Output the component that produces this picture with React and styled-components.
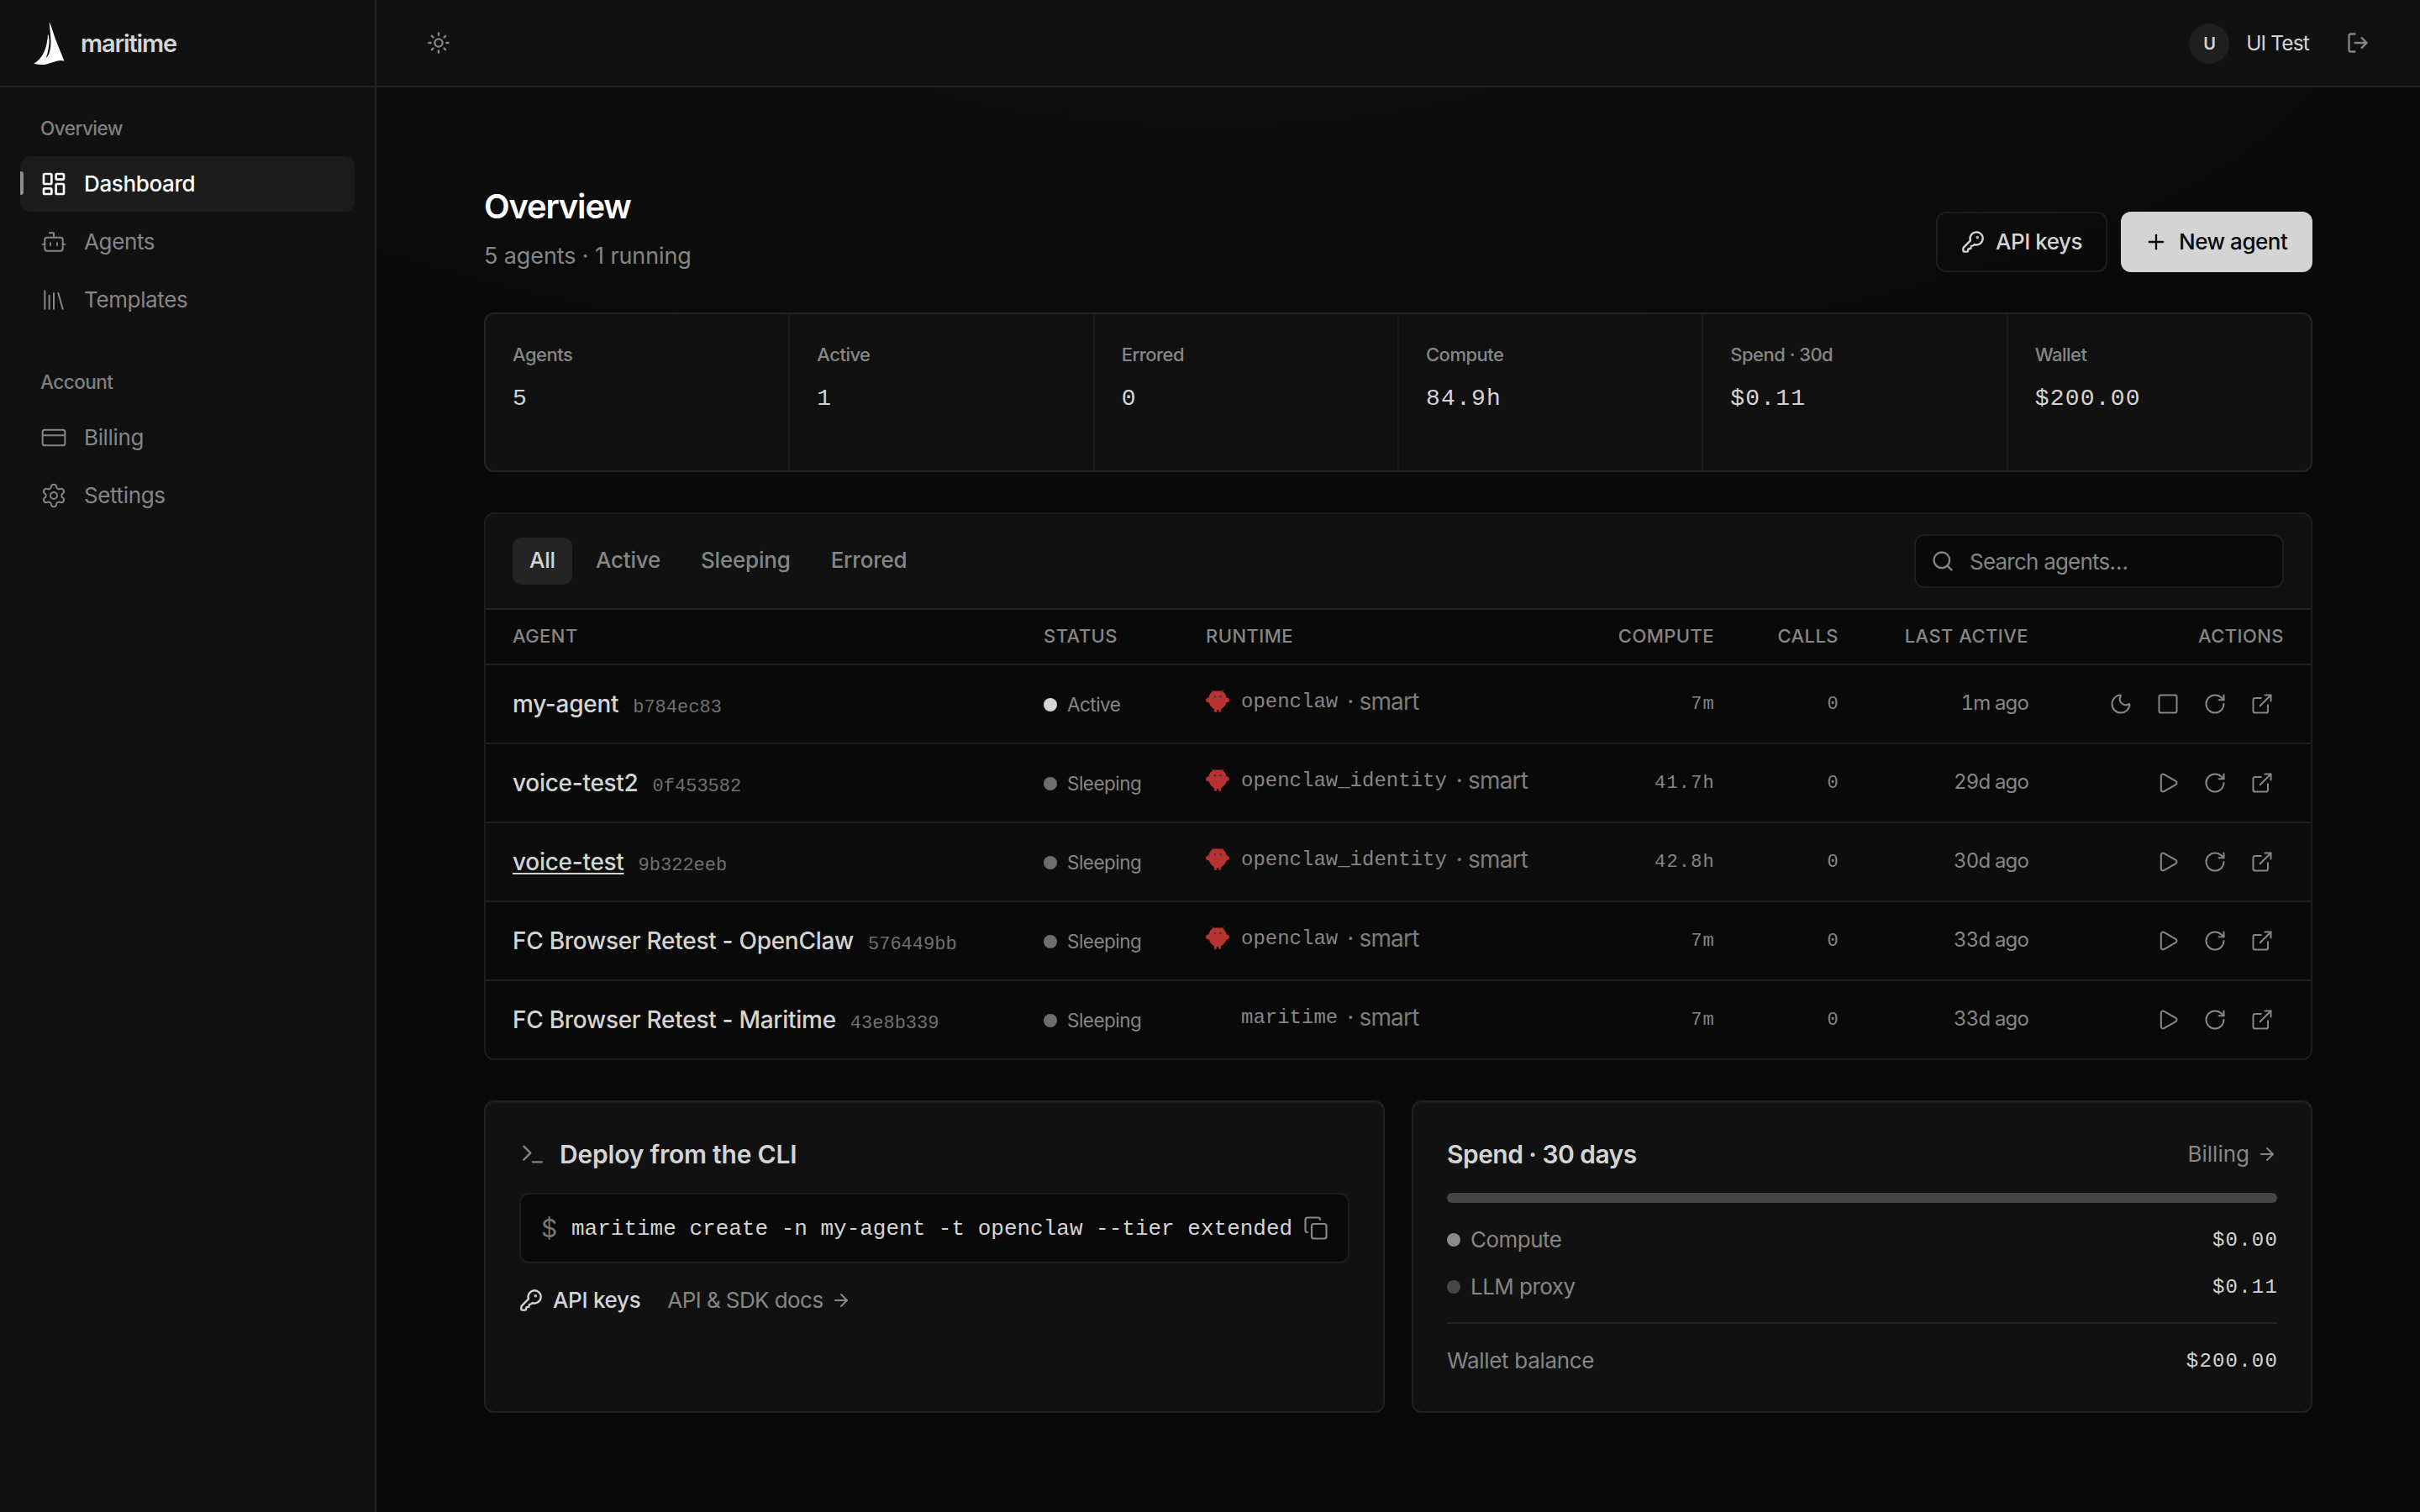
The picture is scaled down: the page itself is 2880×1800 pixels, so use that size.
import styled, { createGlobalStyle } from "styled-components";
import {
  ArrowRight,
  Copy,
  CreditCard,
  ExternalLink,
  KeyRound,
  LayoutDashboard,
  LogOut,
  Moon,
  Play,
  Plus,
  RotateCw,
  Search,
  Square,
  Sun,
  Terminal,
} from "lucide-react";

const GlobalStyle = createGlobalStyle`
  * {
    box-sizing: border-box;
  }

  body {
    margin: 0;
    background: #090909;
    color: #d4d4d4;
    font-family: "Inter", "Liberation Sans", sans-serif;
    font-size: 26px;
    letter-spacing: -0.02em;
    line-height: 1;
  }

  h1, h2, p {
    margin: 0;
    font-weight: 400;
  }

  button {
    font: inherit;
    letter-spacing: inherit;
    color: inherit;
    background: none;
    border: 0;
    padding: 0;
    cursor: pointer;
  }

  svg {
    display: block;
    flex: none;
  }
`;

const Shell = styled.div`
  display: grid;
  grid-template-columns: 448px 1fr;
  width: 2880px;
  height: 1800px;
  overflow: hidden;
  background: radial-gradient(
    ellipse 1470px 470px at 50% 0,
    #0e0e0e 0%,
    #0d0d0d 70%,
    #090909 100%
  );
`;

const Sidebar = styled.aside`
  background: #111111;
  border-right: 2px solid #242424;
`;

const Brand = styled.div`
  display: flex;
  align-items: center;
  gap: 19px;
  height: 104px;
  padding: 0 0 0 40px;
  border-bottom: 2px solid #242424;
  font-size: 29px;
  font-weight: 600;
  letter-spacing: -0.04em;
`;

const Nav = styled.nav`
  display: flex;
  flex-direction: column;
  gap: 3px;
  padding: 35px 24px 0;
`;

const NavLabel = styled.p`
  height: ${(props) => (props.$spaced ? "92px" : "44px")};
  padding: ${(props) => (props.$spaced ? "48px" : "0")} 0 0 24px;
  font-size: 22.5px;
  font-weight: 500;
  line-height: 28px;
  color: #808080;
`;

const NavItem = styled.a`
  position: relative;
  display: flex;
  align-items: center;
  gap: 20px;
  width: 398px;
  height: 66px;
  padding-left: 24px;
  border-radius: 12px;
  background: ${(props) => (props.$active ? "#1c1c1c" : "none")};
  color: ${(props) => (props.$active ? "#ffffff" : "#868686")};
  font-weight: ${(props) => (props.$active ? 500 : 400)};
  letter-spacing: -0.014em;

  &::before {
    content: "";
    display: ${(props) => (props.$active ? "block" : "none")};
    position: absolute;
    left: 0;
    top: 18px;
    width: 4px;
    height: 28px;
    border-radius: 0 3px 3px 0;
    background: #8c8c8c;
  }
`;

const Column = styled.div`
  display: flex;
  flex-direction: column;
`;

const Topbar = styled.header`
  display: flex;
  align-items: center;
  height: 104px;
  padding: 0 60px;
  background: #111111;
  border-bottom: 2px solid #242424;
  color: #868686;

  & > .user {
    display: flex;
    align-items: center;
    gap: 20px;
    margin-left: auto;
    margin-right: 44px;
    padding-top: 1px;
    font-size: 24.5px;
    letter-spacing: -0.035em;
    color: #d4d4d4;
  }
`;

const Avatar = styled.div`
  display: flex;
  align-items: center;
  justify-content: center;
  width: 48px;
  height: 48px;
  border-radius: 50%;
  background: #1f1f1f;
  font-size: 20px;
  font-weight: 600;
`;

const Main = styled.main`
  width: 2176px;
  margin-left: 128px;
`;

const PageHead = styled.div`
  display: flex;
  justify-content: space-between;
  align-items: flex-end;
  height: 220px;

  & h1 {
    font-size: 40px;
    font-weight: 600;
    letter-spacing: -0.03em;
    color: #ffffff;
  }

  & p {
    margin-top: 25px;
    margin-bottom: 6px;
    font-size: 27px;
    letter-spacing: -0.004em;
    color: #868686;
  }
`;

const ButtonRow = styled.div`
  display: flex;
  gap: 16px;
`;

const Button = styled.button`
  display: flex;
  align-items: center;
  gap: 13px;
  width: ${(props) => props.$width}px;
  height: 72px;
  padding: 0 0 1px 28px;
  border: ${(props) => (props.$primary ? "0" : "2px solid #1d1d1d")};
  border-radius: 12px;
  background: ${(props) => (props.$primary ? "#d4d4d4" : "none")};
  color: ${(props) => (props.$primary ? "#0a0a0a" : "#d4d4d4")};
  font-weight: 500;
  letter-spacing: -0.018em;
`;

// the 2px gaps let the container colour through as dividers
const Stats = styled.section`
  display: grid;
  grid-template-columns: repeat(6, 1fr);
  gap: 2px;
  height: 190px;
  margin-top: 48px;
  border: 2px solid #242424;
  border-radius: 12px;
  background: #1b1b1b;
  overflow: hidden;
`;

const Stat = styled.div`
  padding: 36px 32px 0;
  background: #111111;

  & > p {
    font-size: 22px;
    font-weight: 500;
    line-height: 24px;
    color: #868686;
  }

  & > strong {
    display: block;
    margin-top: 27px;
    font-family: "Liberation Mono", monospace;
    font-size: 28px;
    font-weight: 400;
    letter-spacing: 1.2px;
  }
`;

const Panel = styled.section`
  height: 652px;
  margin-top: 48px;
  border: 2px solid #1d1d1d;
  border-radius: 12px;
  background: #090909;
  overflow: hidden;
`;

const Toolbar = styled.div`
  display: flex;
  align-items: center;
  gap: 8px;
  height: 114px;
  padding: 0 32px;
  background: #111111;
  border-bottom: 2px solid #242424;
`;

const Tab = styled.button`
  height: 56px;
  padding: 0 20px 2px;
  border-radius: 10px;
  background: ${(props) => (props.$active ? "#242424" : "none")};
  color: ${(props) => (props.$active ? "#d4d4d4" : "#868686")};
  font-weight: 500;
  letter-spacing: -0.008em;
`;

const SearchBox = styled.label`
  display: flex;
  align-items: center;
  gap: 18px;
  width: 440px;
  height: 64px;
  margin-left: auto;
  padding-left: 18px;
  border: 2px solid #1f1f1f;
  border-radius: 12px;
  background: #090909;
  color: #868686;
  letter-spacing: -0.03em;

  & > span {
    padding-top: 2px;
  }
`;

const Row = styled.div`
  display: grid;
  grid-template-columns: 632px 193px 445px 160px 148px 226px 304px;
  align-items: center;
  height: ${(props) => (props.$last ? "92px" : "94px")};
  padding: 0 32px;
  border-bottom: ${(props) => (props.$last ? "0" : "2px solid #1d1d1d")};
  background: ${(props) => (props.$hover ? "#0d0d0d" : "#090909")};
  color: #868686;
`;

const HeadRow = styled(Row)`
  height: 66px;
  padding-bottom: 3px;
  font-size: 22px;
  font-weight: 500;
  letter-spacing: 0.02em;
  text-transform: uppercase;

  & > span:nth-child(n + 4) {
    text-align: right;
  }
`;

const AgentName = styled.div`
  display: flex;
  align-items: baseline;
  gap: 17px;
  padding-top: 2px;
  font-size: 28px;
  font-weight: 500;
  color: #d4d4d4;
  letter-spacing: -0.01em;

  & > .name {
    text-decoration: ${(props) => (props.$underline ? "underline" : "none")};
    text-decoration-thickness: 2px;
    text-underline-offset: 3px;
  }

  & > .id {
    font-family: "Liberation Mono", monospace;
    font-size: 22px;
    font-weight: 400;
    letter-spacing: 0;
    color: #707070;
  }
`;

const Status = styled.div`
  display: flex;
  align-items: center;
  gap: 12px;
  padding-top: 2px;
  font-size: 22.5px;
`;

const Dot = styled.i`
  flex: none;
  width: 16px;
  height: 16px;
  border-radius: 50%;
  background: ${(props) => props.$color};
`;

const Runtime = styled.div`
  display: flex;
  align-items: center;
  padding-bottom: 7px;

  & > .mark {
    width: 42px;
  }

  & > p {
    padding-top: 2px;
    font-family: "Liberation Mono", monospace;
    font-size: 24px;
    letter-spacing: 0;
  }

  & > span {
    margin-left: 11px;
    font-size: 28px;
    letter-spacing: -0.03em;
    color: #7c7c7c;
  }
`;

const Mono = styled.span`
  padding-top: 2px;
  margin-right: -1px;
  font-family: "Liberation Mono", monospace;
  font-size: ${(props) => props.$size || 22}px;
  letter-spacing: 1.2px;
  text-align: right;
  color: ${(props) => (props.$bright ? "#d4d4d4" : "inherit")};
`;

const LastActive = styled.span`
  padding-bottom: 2px;
  font-size: 24px;
  font-variant-numeric: tabular-nums;
  letter-spacing: -0.035em;
  text-align: right;
`;

const Actions = styled.div`
  display: flex;
  justify-content: flex-end;
  gap: 4px;

  & > button {
    display: flex;
    justify-content: center;
    width: 52px;
  }
`;

const Cards = styled.div`
  display: grid;
  grid-template-columns: 1fr 1fr;
  gap: 32px;
  margin-top: 48px;
`;

const Card = styled.section`
  height: 372px;
  padding: 46px 40px 0;
  border: 2px solid #222222;
  border-radius: 12px;
  background: #111111;
  box-shadow: inset 0 2px 0 #1a1a1a;
`;

const CardHead = styled.div`
  display: flex;
  align-items: center;
  gap: 16px;
  height: 32px;
  color: #868686;
`;

const CardTitle = styled.h2`
  font-size: 30px;
  font-weight: 600;
  letter-spacing: ${(props) => props.$spacing};
  color: #d4d4d4;
`;

const TextLink = styled.a`
  display: flex;
  align-items: center;
  gap: ${(props) => (props.$bright ? "12px" : "9px")};
  color: ${(props) => (props.$bright ? "#d4d4d4" : "#868686")};
  font-weight: ${(props) => (props.$bright ? 500 : 400)};
  letter-spacing: ${(props) => (props.$bright ? "-0.012em" : "-0.022em")};

  &.end {
    margin-left: auto;
    letter-spacing: 0;
  }
`;

const CodeBox = styled.div`
  display: flex;
  align-items: center;
  height: 84px;
  margin-top: 30px;
  padding: 0 23px 0 24px;
  border: 2px solid #1d1d1d;
  border-radius: 12px;
  background: #090909;
  color: #868686;

  & > .prompt {
    width: 36px;
    font-size: 30px;
    color: #777777;
  }

  & > code {
    flex: 1;
    padding-top: 2px;
    font-family: "Liberation Mono", monospace;
    font-size: 26px;
    letter-spacing: 0;
    color: #d4d4d4;
  }
`;

const Links = styled.div`
  display: flex;
  gap: 32px;
  margin-top: 30px;
`;

const Bar = styled.div`
  height: 12px;
  margin-top: 30px;
  border-radius: 6px;
  background: #454545;
`;

const Line = styled.div`
  display: flex;
  align-items: center;
  gap: 12px;
  height: 56px;
  color: #868686;

  & > ${Mono} {
    margin-left: auto;
  }
`;

const Legend = styled.div`
  margin-top: 16px;
  padding-bottom: 14px;
  border-bottom: 2px solid #242424;
`;

const Balance = styled(Line)`
  margin-top: 16px;
  letter-spacing: -0.012em;
`;

const SailLogo = () => (
  <svg width="37" height="51" viewBox="30 29 109 152" fill="#ffffff">
    <path d="M85 29C94 48 99 68 106 88C115 114 128 140 138 168C108 160 88 184 55 181C46 180 37 179 30 177C62 160 78 120 80 72C85 82 86 98 83 117C81 133 77 146 73 158C87 146 92 118 90 86C89 66 86 48 85 29Z" />
  </svg>
);

const Crab = () => (
  <svg width="28" height="27" viewBox="45 63 84 80">
    <path d="M65 64l8 5M110 64l-8 5" stroke="#7c2a2a" strokeWidth="3" />
    <path
      fill="#b83232"
      d="M72 67H103C111 72 117 80 119 91C124 90 129 94 129 100C129 106 124 109 119 108C116 118 108 127 99 132V143H91V135H84V143H75V132C66 127 59 118 56 108C50 109 45 106 45 100C45 94 50 90 55 91C57 80 64 72 72 67Z"
    />
    <path d="M74 84h7v6h-7zM94 84h7v6h-7z" fill="#33383a" />
  </svg>
);

const NavIcon = ({ children }) => (
  <svg
    width="32"
    height="32"
    viewBox="0 0 24 24"
    fill="none"
    stroke="currentColor"
    strokeWidth="1.5"
    strokeLinecap="round"
    strokeLinejoin="round"
  >
    {children}
  </svg>
);

const AgentIcon = () => (
  <NavIcon>
    <path d="M12 8V4H8" />
    <rect width="16" height="12" x="4" y="8" rx="2" />
    <path d="M2 14h2M20 14h2M15 13v2M9 13v2" />
  </NavIcon>
);

const TemplatesIcon = () => (
  <NavIcon>
    <path d="m16 6 4 14M12 6v14M8 8v12M4 4v16" />
  </NavIcon>
);

const SettingsIcon = () => (
  <NavIcon>
    <path d="M9.671 4.136a2.34 2.34 0 0 1 4.659 0 2.34 2.34 0 0 0 3.319 1.915 2.34 2.34 0 0 1 2.33 4.033 2.34 2.34 0 0 0 0 3.831 2.34 2.34 0 0 1-2.33 4.033 2.34 2.34 0 0 0-3.319 1.915 2.34 2.34 0 0 1-4.659 0 2.34 2.34 0 0 0-3.32-1.915 2.34 2.34 0 0 1-2.33-4.033 2.34 2.34 0 0 0 0-3.831A2.34 2.34 0 0 1 6.35 6.051a2.34 2.34 0 0 0 3.319-1.915" />
    <circle cx="12" cy="12" r="3" />
  </NavIcon>
);

const stats = [
  ["Agents", "5"],
  ["Active", "1"],
  ["Errored", "0"],
  ["Compute", "84.9h"],
  ["Spend · 30d", "$0.11"],
  ["Wallet", "$200.00"],
];

const agents = [
  { name: "my-agent", id: "b784ec83", runtime: "openclaw", compute: "7m", last: "1m ago", active: true },
  { name: "voice-test2", id: "0f453582", runtime: "openclaw_identity", compute: "41.7h", last: "29d ago" },
  { name: "voice-test", id: "9b322eeb", runtime: "openclaw_identity", compute: "42.8h", last: "30d ago", hover: true },
  { name: "FC Browser Retest - OpenClaw", id: "576449bb", runtime: "openclaw", compute: "7m", last: "33d ago" },
  { name: "FC Browser Retest - Maritime", id: "43e8b339", runtime: "maritime", compute: "7m", last: "33d ago" },
];

const AgentRow = ({ agent, last }) => (
  <Row $last={last} $hover={agent.hover}>
    <AgentName $underline={agent.hover}>
      <span className="name">{agent.name}</span>
      <span className="id">{agent.id}</span>
    </AgentName>
    <Status>
      <Dot $color={agent.active ? "#d4d4d4" : "#6e6e6e"} />
      {agent.active ? "Active" : "Sleeping"}
    </Status>
    <Runtime>
      <div className="mark">{agent.runtime !== "maritime" && <Crab />}</div>
      <p>{agent.runtime}</p>
      <span>· smart</span>
    </Runtime>
    <Mono>{agent.compute}</Mono>
    <Mono>0</Mono>
    <LastActive>{agent.last}</LastActive>
    <Actions>
      {agent.active ? (
        <>
          <button><Moon size={28} strokeWidth={1.75} /></button>
          <button><Square size={28} strokeWidth={1.75} /></button>
        </>
      ) : (
        <button><Play size={28} strokeWidth={1.75} /></button>
      )}
      <button><RotateCw size={28} strokeWidth={1.75} /></button>
      <button><ExternalLink size={28} strokeWidth={1.75} /></button>
    </Actions>
  </Row>
);

const App = () => {
  return (
    <Shell>
      <GlobalStyle />
      <Sidebar>
        <Brand>
          <SailLogo />
          <span>maritime</span>
        </Brand>
        <Nav>
          <NavLabel>Overview</NavLabel>
          <NavItem $active>
            <LayoutDashboard size={32} strokeWidth={2} />
            Dashboard
          </NavItem>
          <NavItem>
            <AgentIcon />
            Agents
          </NavItem>
          <NavItem>
            <TemplatesIcon />
            Templates
          </NavItem>
          <NavLabel $spaced>Account</NavLabel>
          <NavItem>
            <CreditCard size={32} strokeWidth={1.5} />
            Billing
          </NavItem>
          <NavItem>
            <SettingsIcon />
            Settings
          </NavItem>
        </Nav>
      </Sidebar>
      <Column>
        <Topbar>
          <Sun size={28} strokeWidth={2} />
          <div className="user">
            <Avatar>U</Avatar>
            <span>UI Test</span>
          </div>
          <LogOut size={28} strokeWidth={2} />
        </Topbar>
        <Main>
          <PageHead>
            <div>
              <h1>Overview</h1>
              <p>5 agents · 1 running</p>
            </div>
            <ButtonRow>
              <Button $width={204}>
                <KeyRound size={28} strokeWidth={2} />
                API keys
              </Button>
              <Button $primary $width={228}>
                <Plus size={28} strokeWidth={2} />
                New agent
              </Button>
            </ButtonRow>
          </PageHead>
          <Stats>
            {stats.map(([label, value]) => (
              <Stat key={label}>
                <p>{label}</p>
                <strong>{value}</strong>
              </Stat>
            ))}
          </Stats>
          <Panel>
            <Toolbar>
              <Tab $active>All</Tab>
              <Tab>Active</Tab>
              <Tab>Sleeping</Tab>
              <Tab>Errored</Tab>
              <SearchBox>
                <Search size={28} strokeWidth={2} />
                <span>Search agents…</span>
              </SearchBox>
            </Toolbar>
            <HeadRow>
              <span>Agent</span>
              <span>Status</span>
              <span>Runtime</span>
              <span>Compute</span>
              <span>Calls</span>
              <span>Last active</span>
              <span>Actions</span>
            </HeadRow>
            {agents.map((agent, i) => (
              <AgentRow key={agent.id} agent={agent} last={i === agents.length - 1} />
            ))}
          </Panel>
          <Cards>
            <Card>
              <CardHead>
                <Terminal size={32} strokeWidth={1.75} />
                <CardTitle $spacing="-0.007em">Deploy from the CLI</CardTitle>
              </CardHead>
              <CodeBox>
                <span className="prompt">$</span>
                <code>maritime create -n my-agent -t openclaw --tier extended</code>
                <Copy size={30} strokeWidth={1.75} />
              </CodeBox>
              <Links>
                <TextLink $bright>
                  <KeyRound size={28} strokeWidth={2} />
                  API keys
                </TextLink>
                <TextLink>
                  API &amp; SDK docs
                  <ArrowRight size={24} strokeWidth={2} />
                </TextLink>
              </Links>
            </Card>
            <Card>
              <CardHead>
                <CardTitle $spacing="-0.018em">Spend · 30 days</CardTitle>
                <TextLink className="end">
                  Billing
                  <ArrowRight size={24} strokeWidth={2} />
                </TextLink>
              </CardHead>
              <Bar />
              <Legend>
                <Line>
                  <Dot $color="#8a8a8a" />
                  Compute
                  <Mono $size={24} $bright>$0.00</Mono>
                </Line>
                <Line>
                  <Dot $color="#484848" />
                  LLM proxy
                  <Mono $size={24} $bright>$0.11</Mono>
                </Line>
              </Legend>
              <Balance>
                Wallet balance
                <Mono $size={24} $bright>$200.00</Mono>
              </Balance>
            </Card>
          </Cards>
        </Main>
      </Column>
    </Shell>
  );
};

export default App;
